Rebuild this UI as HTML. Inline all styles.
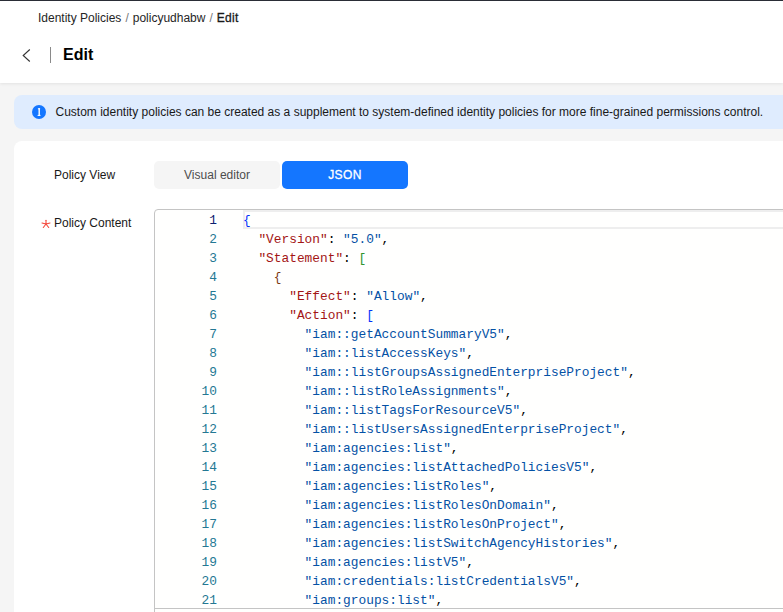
<!DOCTYPE html>
<html><head><meta charset="utf-8">
<style>
*{box-sizing:border-box;margin:0;padding:0}
html,body{width:783px;height:612px;overflow:hidden;background:#f5f5f5;font-family:"Liberation Sans",sans-serif;color:#191919}
.hdr{position:absolute;left:0;top:0;width:783px;height:83px;background:#fff;border-top:1px solid #2a2d36;box-shadow:0 1px 3px rgba(0,0,0,0.08)}
.bc{position:absolute;left:38px;top:9px;font-size:12px;line-height:16px;color:#252525;white-space:nowrap}
.bc b{font-weight:normal;color:#191919;-webkit-text-stroke:0.3px #191919;letter-spacing:0.25px}
.bc .sep{color:#777;margin:0 4px}
.back{position:absolute;left:20px;top:47px;width:14px;height:16px}
.vsep{position:absolute;left:50px;top:46px;width:1px;height:16px;background:#8a8a8a}
.title{position:absolute;left:63px;top:44px;font-size:16px;line-height:20px;font-weight:bold;color:#000}
.info{position:absolute;left:14px;top:95px;width:790px;height:34px;background:#dfecfe;border-radius:8px}
.info .ic{position:absolute;left:18px;top:10px;width:14px;height:14px}
.info .tx{position:absolute;left:41.5px;top:9px;font-size:12px;line-height:16px;color:#191919;white-space:nowrap}
.card{position:absolute;left:14px;top:141px;width:800px;height:520px;background:#fff;border-radius:8px}
.lbl{position:absolute;font-size:12px;line-height:16px;color:#191919;white-space:nowrap}
.req{position:absolute;left:41px;top:218.5px}
.seg1{position:absolute;left:154px;top:161px;width:126px;height:28px;background:#f5f5f5;border-radius:5px;font-size:12px;line-height:28px;text-align:center;color:#4d4d4d}
.seg2{position:absolute;left:282px;top:161px;width:126px;height:28px;background:#1476ff;border-radius:5px;font-size:12px;line-height:28px;text-align:center;color:#fff;-webkit-text-stroke:0.3px #fff;letter-spacing:0.4px}
.ed{position:absolute;left:154px;top:209px;width:700px;height:420px;border:1px solid #c4c4c4;border-radius:4px;background:#fffffe}
.edb{position:absolute;left:155px;top:608px;width:700px;height:1px;background:#c4c4c4}
.cur{position:absolute;left:243px;top:210px;width:600px;height:19px;border:2px solid #eeeeee}
.ln{position:absolute;left:160px;width:57px;text-align:right;font-family:"Liberation Mono",monospace;font-size:12.83px;line-height:19px;color:#237893}
.code{position:absolute;left:243px;top:211px;font-family:"Liberation Mono",monospace;font-size:12.83px;line-height:19px;white-space:pre;color:#000}
.k{color:#a31515}.s{color:#0451a5}.b1{color:#0431fa}.b2{color:#319331}.b3{color:#7b3814}
</style></head><body>
<div class="hdr">
  <div class="bc">Identity Policies<span class="sep">/</span>policyudhabw<span class="sep">/</span><b>Edit</b></div>
  <svg class="back" viewBox="0 0 14 16"><path d="M9.8 1.5 L3.2 7.5 L9.8 13.5" fill="none" stroke="#333" stroke-width="1.1"/></svg>
  <div class="vsep"></div>
  <div class="title">Edit</div>
</div>
<div class="info">
  <svg class="ic" viewBox="0 0 14 14"><circle cx="7" cy="7" r="7" fill="#1476ff"/><rect x="6.5" y="3.3" width="1.4" height="7.6" fill="#fff"/><rect x="5.9" y="3.3" width="2.2" height="1" fill="#fff"/><rect x="5.6" y="9.9" width="2.9" height="1" fill="#fff"/></svg>
  <div class="tx">Custom identity policies can be created as a supplement to system-defined identity policies for more fine-grained permissions control.</div>
</div>
<div class="card"></div>
<div class="lbl" style="left:54px;top:167px">Policy View</div>
<div class="seg1">Visual editor</div>
<div class="seg2">JSON</div>
<svg class="req" width="10" height="10" viewBox="0 0 10 10"><g stroke="#f5493d" stroke-width="1.1" stroke-linecap="round" fill="none"><path d="M5 5V1.3"/><path d="M5 5L1 4"/><path d="M5 5L9 4"/><path d="M5 5L2.3 8.5"/><path d="M5 5L7.7 8.5"/></g></svg>
<div class="lbl" style="left:54px;top:215px">Policy Content</div>
<div class="ed"></div>
<div class="edb"></div>
<div class="cur"></div>
<div class="ln" style="top:211px;color:#0b216f">1</div>
<div class="ln" style="top:230px">2<br>3<br>4<br>5<br>6<br>7<br>8<br>9<br>10<br>11<br>12<br>13<br>14<br>15<br>16<br>17<br>18<br>19<br>20<br>21</div>
<div class="code"><span class="b1">{</span>
  <span class="k">"Version"</span>: <span class="s">"5.0"</span>,
  <span class="k">"Statement"</span>: <span class="b2">[</span>
    <span class="b3">{</span>
      <span class="k">"Effect"</span>: <span class="s">"Allow"</span>,
      <span class="k">"Action"</span>: <span class="b1">[</span>
        <span class="s">"iam::getAccountSummaryV5"</span>,
        <span class="s">"iam::listAccessKeys"</span>,
        <span class="s">"iam::listGroupsAssignedEnterpriseProject"</span>,
        <span class="s">"iam::listRoleAssignments"</span>,
        <span class="s">"iam::listTagsForResourceV5"</span>,
        <span class="s">"iam::listUsersAssignedEnterpriseProject"</span>,
        <span class="s">"iam:agencies:list"</span>,
        <span class="s">"iam:agencies:listAttachedPoliciesV5"</span>,
        <span class="s">"iam:agencies:listRoles"</span>,
        <span class="s">"iam:agencies:listRolesOnDomain"</span>,
        <span class="s">"iam:agencies:listRolesOnProject"</span>,
        <span class="s">"iam:agencies:listSwitchAgencyHistories"</span>,
        <span class="s">"iam:agencies:listV5"</span>,
        <span class="s">"iam:credentials:listCredentialsV5"</span>,
        <span class="s">"iam:groups:list"</span>,
</div>
</body></html>
